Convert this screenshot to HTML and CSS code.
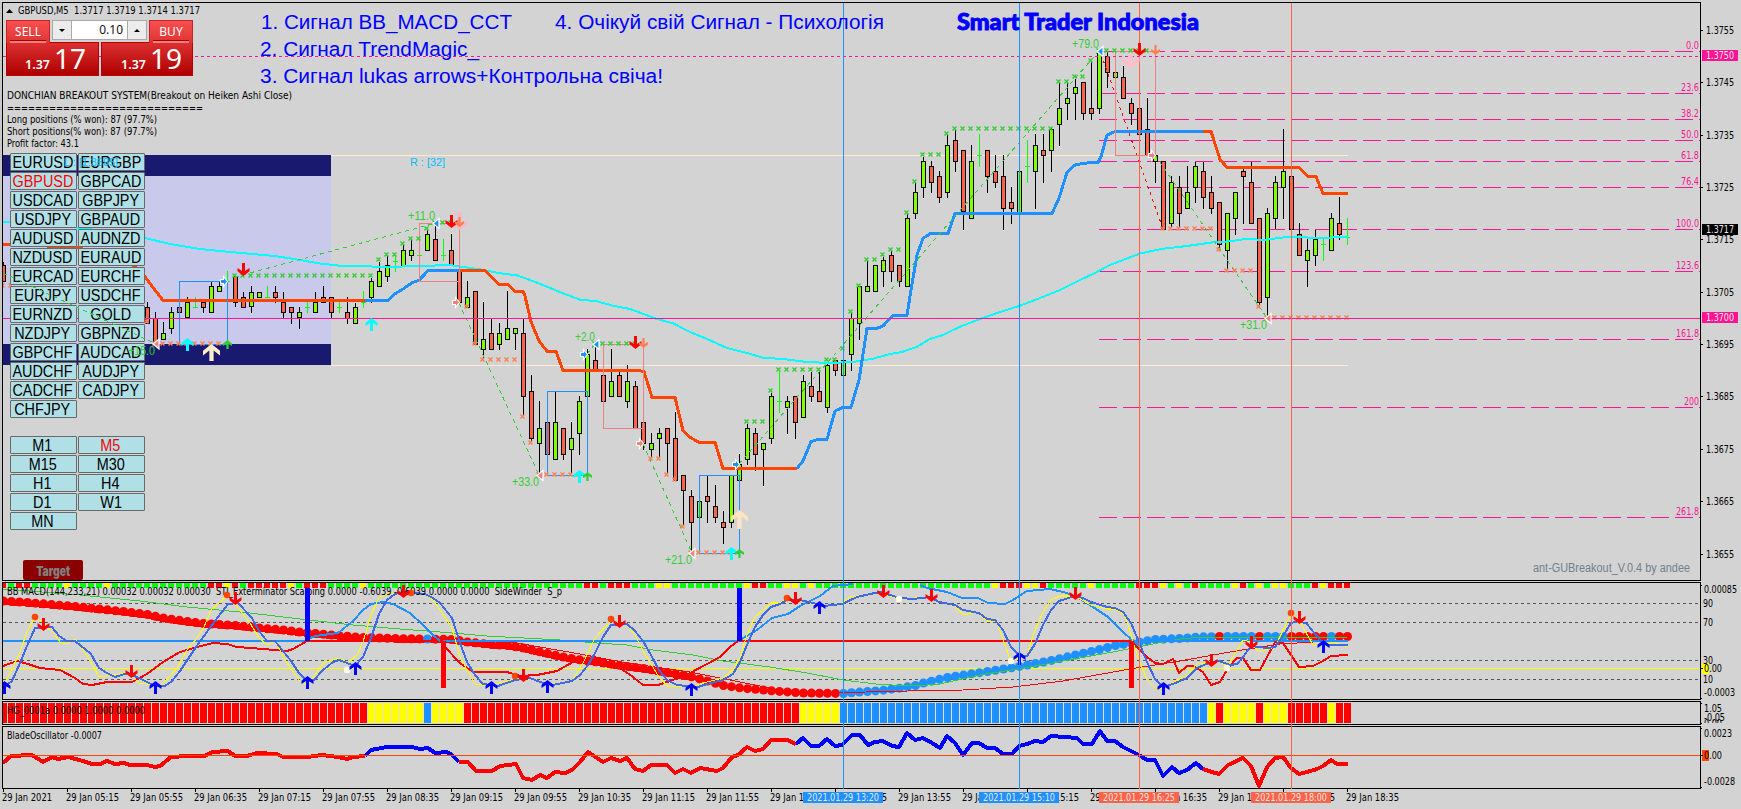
FILE: index.html
```html
<!DOCTYPE html>
<html lang="uk">
<head>
<meta charset="utf-8">
<title>GBPUSD,M5</title>
<link rel="stylesheet" href="styles.css">
</head>
<body>
<main class="terminal">
  <svg class="layer" id="chart" viewBox="0 0 1741 809" width="1741" height="809"></svg>

  <section class="ticket">
    <div class="ticket-top">
      <div class="tab">SELL</div>
      <div class="lot">
        <span class="step"><i class="tri down"></i></span>
        <span class="lot-value">0.10</span>
        <span class="step"><i class="tri up"></i></span>
      </div>
      <div class="tab">BUY</div>
    </div>
    <div class="ticket-quotes">
      <div class="quote"><small>1.37</small><b>17</b></div>
      <div class="quote"><small>1.37</small><b>19</b></div>
    </div>
  </section>

  <section class="switcher">
    <div class="keys" id="symbols"></div>
    <div class="keys" id="frames"></div>
    <div class="target"><span>Target</span></div>
  </section>

  <svg class="layer over" id="overlay" viewBox="0 0 1741 809" width="1741" height="809"></svg>
</main>
<script src="chart.js"></script>
</body>
</html>
```
FILE: styles.css
```css
* { box-sizing: border-box; }
body { margin: 0; background: #d3d3d3; overflow: hidden; }
.terminal { position: relative; width: 1741px; height: 809px; font-family: "DejaVu Sans Condensed", "DejaVu Sans", sans-serif; }
.layer { position: absolute; left: 0; top: 0; display: block; }
.layer text { white-space: pre; }
.over { pointer-events: none; }
.crisp { shape-rendering: crispEdges; }

.ui { font-family: "DejaVu Sans Condensed", "DejaVu Sans", sans-serif; font-size: 10.5px; }
.arial { font-family: "Liberation Sans", Arial, sans-serif; }
.brand { font-family: Lato, Inter, sans-serif; font-weight: 900; font-size: 22.5px; stroke: #00f; stroke-width: .9px; }

.ticket { position: absolute; left: 6px; top: 20px; width: 187px; height: 56px; }
.ticket-top { display: flex; justify-content: space-between; height: 22px; }
.tab { width: 44px; height: 23px; color: #fff; font: 12px/21px "Noto Sans", sans-serif; text-align: center; background: linear-gradient(#f75050, #df3333); border: 1px solid #c22; border-bottom: 0; position: relative; z-index: 1; }
.tab::after { content: ""; position: absolute; left: 3px; right: 3px; bottom: 0; height: 2px; background: #f08080; border-top: 1px solid #a00; }
.lot { display: flex; width: 95px; height: 20px; border: 1px solid #a9a9a9; background: #fff; }
.step { width: 19px; background: #ececec; display: flex; align-items: center; justify-content: center; }
.step:first-child { border-right: 1px solid #a9a9a9; }
.step:last-child { border-left: 1px solid #a9a9a9; }
.lot-value { flex: 1; text-align: right; padding-right: 4px; font: 12px/18px "Noto Sans", sans-serif; color: #111; }
.tri { border-left: 3px solid transparent; border-right: 3px solid transparent; }
.tri.down { border-top: 3px solid #000; }
.tri.up { border-bottom: 3px solid #000; }
.ticket-quotes { display: flex; gap: 2px; }
.quote { width: 93px; height: 34px; display: flex; justify-content: flex-end; align-items: baseline; gap: 4px; padding-right: 12px; color: #fff; background: linear-gradient(#dc3030, #ae0000); border: 1px solid #b80000; }
.quote:last-child { width: 92px; padding-right: 10px; }
.quote small { font: 600 12.5px/30px "Noto Sans", sans-serif; }
.quote b { font: 400 28px/30px "Noto Sans", sans-serif; }

.switcher { position: absolute; left: 10px; top: 153px; width: 135px; }
.keys { display: grid; grid-template-columns: 67px 67px; column-gap: 1px; row-gap: 1px; margin-bottom: 18px; }
.key { height: 18px; background: #b0e0e6; border: 1px solid #696969; border-radius: 1px; color: #000; font: 16px/18px "Liberation Sans", Arial, sans-serif; display: flex; justify-content: center; white-space: nowrap; }
.key span { transform: scaleX(.9) translateX(-1px); }
.key.on { color: #f00; }
.target { margin: 30px 0 0 13px; width: 60px; height: 20px; background: #8b0000; border-radius: 2px; color: #808080; display: flex; justify-content: center; font: 900 13px/22px Inter, "Liberation Sans", sans-serif; }
.target span { transform: scaleX(.8); }
```
FILE: chart.js
```js
const NS = 'http://www.w3.org/2000/svg';
const chart = document.getElementById('chart');
const overlay = document.getElementById('overlay');
let layer = chart;

function el(tag, attrs, text) {
  const n = document.createElementNS(NS, tag);
  for (const k in attrs) n.setAttribute(k, attrs[k]);
  if (text !== undefined) n.textContent = text;
  layer.appendChild(n);
  return n;
}
const box = (x, y, w, h, fill) => el('rect', { x, y, width: w, height: h, fill, class: 'crisp' });
const frame = (x1, y1, x2, y2, c) => el('rect', { x: x1 + .5, y: y1 + .5, width: x2 - x1, height: y2 - y1, fill: 'none', stroke: c, class: 'crisp' });
const hline = (x1, x2, y, c, dash) => el('path', { d: `M${x1} ${y + .5}H${x2}`, stroke: c, 'stroke-dasharray': dash || 'none', class: 'crisp' });
const curve = (pts, c, w, dash) => el('polyline', { points: pts, fill: 'none', stroke: c, 'stroke-width': w, 'stroke-dasharray': dash || 'none', 'stroke-linejoin': 'round', class: 'crisp' });
function label(x, y, s, c, w, size, cls) {
  const a = { x, y, fill: c, class: cls || 'ui' };
  if (w) { a.textLength = w; a.lengthAdjust = 'spacingAndGlyphs'; }
  if (size) a.style = `font-size:${size}px`;
  el('text', a, s);
}
function mark(x, y, c) {
  el('path', { d: `M${x - 2.5} ${y - 1.5}l4 4M${x + 1.5} ${y - 1.5}l-4 4`, stroke: c, 'stroke-width': 1.4 });
}
function marks(from, to, y, c) { for (let x = from; x <= to; x += 8) mark(x, y, c); }
/* arrow: (x, y) is the tip, dir 1 points down and -1 points up */
function arrow(x, y, dir, h, w, c) {
  const k = -dir, s = w / 2, t = Math.max(1, w / 8);
  el('path', { fill: c, d: `M${x} ${y}L${x - s} ${y + k * s * .8}L${x - s} ${y + k * (s * .8 + t * 2.2)}L${x - t} ${y + k * (t * 2.6 + 1)}V${y + k * h}H${x + t}V${y + k * (t * 2.6 + 1)}L${x + s} ${y + k * (s * .8 + t * 2.2)}V${y + k * s * .8}Z` });
}
const triL = (x, y, c) => el('path', { d: `M${x - 5} ${y}l6 -5v10z`, fill: c, stroke: '#fff', 'stroke-width': 1.2 });
const triR = (x, y, c) => el('path', { d: `M${x - 3.5} ${y - 2}h3v-3l4 5l-4 5v-3h-3z`, fill: c, stroke: '#fff', 'stroke-width': 1.1 });

const PINK = '#ff1493', BLUE = '#1e90ff', ORANGE = '#ff4500', GREEN = '#32cd32', SALMON = '#ff7f50', CORAL = '#f08080', TOMATO = '#ff6347';

/* session range */
box(3, 155, 328, 210, '#c9c9ec');
box(3, 155, 328, 21, '#191970');
box(3, 344, 328, 21, '#191970');
hline(331, 1348, 155, '#ffebcd');
hline(331, 1348, 365, '#ffebcd');

/* Fibonacci grid */
[['0.0', 51], ['23.6', 93], ['38.2', 119], ['50.0', 140], ['61.8', 161], ['76.4', 187], ['100.0', 229], ['123.6', 271], ['161.8', 339], ['200', 407], ['261.8', 517]].forEach(([s, y]) => {
  hline(1099, 1700, y, PINK, '18 6');
  const w = s.length === 3 ? (s === '200' ? 15 : 13) : s.length === 4 ? 18 : 23;
  label(1699 - w, y - 2, s, PINK, w);
});

/* candles: x, high, body top, body bottom, low, direction */
const candles = `3 262 265 282 282 r
147 302 307 324 324 r|155 312 318 343 343 r|163 322 333 340 340 g|171 307 312 329 334 g|179 307 307 313 313 r|187 297 302 318 318 g|195 297 307 307 308 l|203 302 302 308 313 r|211 282 286 313 313 g|219 282 286 292 292 g|227 271 281 281 290 l|235 276 276 303 307 r|243 292 297 308 308 r|251 286 292 307 313 g|259 292 292 298 298 g|267 286 297 297 298 l|275 286 292 298 303 r|283 292 302 313 318 r|291 307 307 313 324 r|299 307 312 318 329 g|307 300 307 307 313 l|315 292 302 313 313 g|323 286 297 303 303 r|331 297 297 313 318 r|339 302 307 307 313 l|347 297 312 319 324 r|355 303 307 324 324 g|363 291 302 302 308 l|371 278 281 298 303 g|379 262 271 287 287 g|387 256 265 277 282 g|395 256 261 261 272 l|403 245 250 266 266 g|411 240 250 256 261 g|419 254 255 255 256 l|427 230 234 251 251 g|435 223 239 261 261 r|443 239 255 255 261 l|451 234 250 265 265 r|459 271 271 303 303 r|467 281 297 308 308 g|475 291 291 345 345 r|483 302 339 350 358 g|491 319 333 350 350 r|499 323 333 345 350 g|507 291 328 340 340 g|515 328 328 334 350 g|523 319 333 397 415 r|531 375 391 439 441 r|539 401 428 444 473 g|547 422 422 455 455 r|555 392 422 460 460 g|563 428 428 455 460 r|571 422 438 450 473 g|579 396 401 434 455 g|587 349 354 397 397 g|595 346 360 370 370 r|603 375 375 402 402 r|611 349 381 397 397 g|619 372 375 397 397 r|627 365 381 402 408 g|635 381 386 429 429 r|643 422 422 444 450 r|651 433 443 450 457 g|659 428 433 439 457 g|667 428 428 444 473 r|675 412 438 481 481 r|683 475 475 491 526 r|691 490 496 523 552 r|699 501 501 518 518 g|707 476 496 502 523 r|715 485 506 518 523 r|723 511 522 528 544 r|731 475 475 523 528 g|739 454 464 481 481 g|747 424 428 460 465 g|755 428 433 455 471 r|763 443 443 450 486 g|771 393 396 439 444 g|779 372 401 401 413 l|787 396 401 408 434 g|795 396 396 423 439 r|803 375 381 418 418 g|811 372 386 397 402 r|819 372 391 402 402 r|827 362 365 408 413 g|835 360 360 371 376 r|843 360 360 376 376 g|851 313 318 355 371 g|859 286 286 324 340 g|867 261 286 292 292 g|875 265 265 292 292 g|883 257 260 272 287 g|891 251 255 272 282 r|899 265 265 282 287 r|907 214 218 287 287 g|915 183 192 214 219 g|923 157 161 188 198 g|931 161 166 183 193 r|939 171 176 198 203 r|947 135 145 193 198 g|955 130 140 162 172 r|963 150 150 212 230 r|971 145 161 219 219 g|979 134 155 155 167 l|987 150 150 177 193 r|995 155 171 183 188 r|1003 155 176 209 230 r|1011 187 202 209 224 r|1019 171 171 213 213 g|1027 140 166 166 183 l|1035 134 145 172 209 g|1043 134 150 156 183 r|1051 128 129 151 172 g|1059 83 108 125 146 g|1067 83 98 104 120 g|1075 79 87 94 120 g|1083 82 82 114 120 r|1091 62 108 114 120 r|1099 51 51 109 114 g|1107 52 56 73 88 r|1115 72 72 78 78 g|1123 66 77 99 99 r|1131 98 103 114 125 r|1139 108 108 135 135 r|1147 98 129 156 156 r|1155 155 155 162 183 g|1163 161 161 230 230 r|1171 176 182 224 227 g|1179 176 187 214 227 r|1187 166 192 209 209 g|1195 162 166 188 203 g|1203 162 171 198 209 r|1211 176 192 209 214 r|1219 202 202 245 248 r|1227 213 213 251 269 g|1235 192 192 219 235 g|1243 168 171 177 224 r|1251 162 182 224 224 r|1259 218 218 303 305 r|1267 208 213 298 317 g|1275 176 182 219 229 g|1283 129 171 188 219 g|1291 176 176 230 230 r|1299 223 234 256 256 r|1307 239 250 261 287 g|1315 230 239 256 266 g|1323 239 244 244 261 l|1331 213 218 251 251 g|1339 197 223 235 240 r|1347 218 237 237 245 l`;
candles.split(/[|\n]/).forEach(row => {
  const p = row.split(' '), d = p[5];
  const [x, hi, top, bot, lo] = p.map(Number);
  if (d === 'l') {
    box(x, hi, 1, lo - hi, '#00ff00');
    box(x - 2, top, 5, 1, '#00ff00');
    return;
  }
  box(x, hi, 1, lo - hi, '#000');
  box(x - 2, top, 5, bot - top, '#000');
  box(x - 1, top + 1, 3, bot - top - 2, d === 'g' ? '#7fff00' : TOMATO);
});

/* moving average and trend line */
const CY = '#00ffff';
curve('3,221.5 10,221.5', CY, 2);
curve('76,228 92,228', CY, 2);
curve('145,238 170,244 200,249 230,252 275,256 300,260 320,263.5 343,266 383,266.7 423,266.3 447,264.7 463,267 480,269.3 500,273.3 517,275.3 530,280 547,286.7 563,293.3 580,299.7 597,301.3 613,305.7 630,309 640,312.7 657,319 673,323.3 690,332 707,339 727,348 747,353 763,357.7 783,359 807,362 830,363 853,362 873,358.7 890,354 902,352 917,346.7 930,339 943,335 960,326.7 980,319 997,313 1020,305.7 1040,298 1060,290 1080,280 1093,274 1110,265 1140,253.5 1163,248.7 1187,246 1213,242.3 1230,241.3 1247,238.7 1263,240 1287,237 1300,237 1313,238 1330,238 1335,237 1348,237', CY, 2);
curve('3,244.5 75,247 130,262 145,277 163,300.5 365,300.5', ORANGE, 3);
curve('365,300.5 388,300.5 395,293.7 402,289.7 412,282.7 419,280.3 428,270.7 459,270.7', BLUE, 3);
curve('459,270.7 485,270.7 499,284.3 508,284.3 515,291.3 523,291.3 525,296 531,321.7 539,340.7 547,351.3 556,351.3 563,370.5 638,370.5 644,371.5 652,397.3 675,397.3 683,430.7 690,437.3 699,442.3 715,442.3 723,468.5 797,468.5', ORANGE, 3);
curve('797,468.3 803,461 811,441.7 818,439.3 827,439.3 835,411 843,407.3 851,407.3 859,380 867,328.5 877,328.3 883,326 893,315.5 907,315.3 911,290 917,255 923,238.3 931,233.3 948,233.3 955,213.5 1052,213.5 1059,198.3 1067,172.3 1075,165 1083,163.3 1098,162.3 1101,156.7 1107,135 1115,131.5 1203,131.5', BLUE, 3);
curve('1203,131.5 1211,131.5 1220,159.3 1227,167.5 1299,167.5 1308,176.5 1316,176.5 1323,193.5 1348,193.5', ORANGE, 3);

/* trades */
['235,277 436,223', '459,303 539,475', '587,354 595,344', '643,444 692,553', '739,464 1099,51', '1155,155 1267,318'].forEach(p => curve(p, GREEN, 1, '4 4'));
curve('1101,54 1163,229', '#f00', 1, '3 4');
[[179, 281, 227, 344], [547, 391, 587, 475], [699, 475, 739, 553]].forEach(r => frame(...r, BLUE));
[[419, 223, 459, 281], [603, 344, 643, 428], [1115, 51, 1155, 155]].forEach(r => frame(...r, CORAL));

[[235, 371, 275], [379, 379, 259], [387, 395, 254], [403, 403, 243], [411, 419, 238], [427, 427, 228], [435, 451, 222], [595, 635, 343], [747, 763, 421], [771, 771, 390], [779, 819, 369], [827, 835, 359], [843, 843, 348], [851, 851, 311], [859, 859, 285], [867, 875, 259], [883, 883, 254], [891, 899, 249], [907, 907, 212], [915, 915, 181], [923, 939, 154], [947, 947, 133], [955, 1051, 128], [1059, 1067, 81], [1075, 1083, 76], [1091, 1091, 60], [1099, 1147, 50]].forEach(m => marks(...m, GREEN));
[[3, 11, 285], [147, 147, 321], [155, 219, 343], [467, 467, 306], [475, 475, 343], [483, 515, 359], [523, 523, 416], [531, 531, 442], [539, 579, 474], [651, 659, 458], [667, 667, 474], [675, 675, 479], [683, 683, 526], [691, 731, 552], [1163, 1211, 228], [1219, 1219, 249], [1227, 1251, 270], [1259, 1259, 306], [1267, 1347, 317]].forEach(m => marks(...m, SALMON));

/* price levels and time cursors */
hline(3, 1700, 318, PINK);
hline(3, 1700, 56, PINK, '3 3');
[[843, BLUE], [1019, BLUE], [1139, TOMATO], [1291, TOMATO]].forEach(([x, c]) => box(x, 3, 1, 785, c));

/* signals */
arrow(459.5, 230, 1, 18, 15, '#ffb6c1');
arrow(1130.5, 69, 1, 15, 18, '#ffc0cb');
[[243.5, 276], [451.5, 228], [635.5, 349], [1139.5, 56]].forEach(([x, y]) => arrow(x, y, 1, 13, 12, '#f00'));
[[459.5, 227], [643.5, 348], [1155.5, 55]].forEach(([x, y]) => arrow(x, y, 1, 10, 9, SALMON));
[[187.5, 338], [371.5, 318], [579.5, 470], [731.5, 547]].forEach(([x, y]) => arrow(x, y, -1, 13, 12, CY));
[[227.5, 340], [587.5, 472], [739.5, 549]].forEach(([x, y]) => arrow(x, y, -1, 9, 9, GREEN));
arrow(211.5, 344, -1, 17, 17, '#ffebcd');
arrow(739.5, 510, -1, 19, 17, '#ffe4c4');
[[438, 223.5], [598, 344.5], [1102, 51.5]].forEach(([x, y]) => triL(x, y, BLUE));
[[158, 344], [542, 475.5], [694, 553.5], [1270, 318.5]].forEach(([x, y]) => triL(x, y, CORAL));
[[224, 281.5], [584, 354.5], [736, 464.5]].forEach(([x, y]) => triR(x, y, BLUE));
[[456, 302.5], [640, 443.5], [1152, 155.5]].forEach(([x, y]) => triR(x, y, CORAL));
[['+11.0', 408, 220, 27], ['+2.0', 575, 341, 20], ['+33.0', 512, 486, 27], ['+21.0', 665, 564, 27], ['+79.0', 1072, 48, 27], ['+31.0', 1240, 329, 27]].forEach(([s, x, y, w]) => label(x, y, s, GREEN, w, 12, 'arial'));
label(410, 166, 'R : [32]', '#00bfff', 35, 11, 'arial');

/* headings */
[['1. Сигнал BB_MACD_CCT', 261, 29, 251], ['4. Очікуй свій Сигнал - Психологія', 555, 29, 329], ['2. Сигнал TrendMagic_', 260, 56, 219], ['3. Сигнал lukas arrows+Контрольна свіча!', 260, 83, 403]].forEach(([s, x, y, w]) => label(x, y, s, '#00f', w, 19.5, 'arial'));
label(957, 30, 'Smart Trader Indonesia', '#00f', 242, 0, 'brand');
label(1533, 572, 'ant-GUBreakout_V.0.4 by andee', '#708090', 157, 12, 'arial');
el('path', { d: 'M6 13L9.5 9L13 13Z', fill: '#000' });
label(18, 14, 'GBPUSD,M5  1.3717 1.3719 1.3714 1.3717', '#000', 182);
label(7, 99, 'DONCHIAN BREAKOUT SYSTEM(Breakout on Heiken Ashi Close)', '#000', 285);
label(7, 112, '============================', '#000', 196);
label(7, 123, 'Long positions (% won): 87 (97.7%)', '#000', 150);
label(7, 135, 'Short positions(% won): 87 (97.7%)', '#000', 150);
label(7, 147, 'Profit factor: 43.1', '#000', 72);

/* ---- BB MACD window ---- */
[603, 622, 660, 679].forEach(y => hline(3, 1700, y, '#555', '3 3'));
box(3, 668, 1697, 1, '#ffff00');

const HUES = { r: '#f00', g: '#00ff00', y: '#ffff00', b: BLUE };
function strip(runs, draw) {
  let i = 0;
  for (const [, hue, n] of runs.matchAll(/([rgyb])(\d+)/g)) for (let k = 0; k < +n; k++, i++) draw(3 + i * 8, HUES[hue]);
}
strip('r1g1r2g4y1g4y1g12r2y1r1g1r5y1g1r3g4y1g27r2g1r3g3y2g9y1r2g2y2g1y1g22y1r3y2r1g5y1g5r3y1g1y1g1r1g4y1r1g1y1g1y2g3r1y1r3', (x, c) => box(x === 3 ? 3 : x - 3, 583, x === 3 ? 3 : 6, 5, c));

const macd = [[3, 601], [27, 602.5], [51, 604.5], [75, 606.5], [99, 609], [123, 611.5], [147, 614.5], [163, 618], [187, 621.5], [203, 623.5], [235, 625.5], [259, 628], [283, 630], [299, 632], [331, 635], [363, 637.5], [395, 638.5], [453, 639.5], [467, 642], [491, 644.5], [507, 645.5], [523, 648], [540, 652], [563, 657], [577, 659.5], [597, 662], [620, 665.5], [643, 668.5], [667, 672.5], [690, 676.5], [707, 681], [723, 685.5], [740, 688], [773, 691], [803, 693], [843, 693.5], [860, 692], [880, 690.5], [900, 688], [915, 685.5], [923, 683], [947, 677.5], [970, 674], [987, 671.5], [1013, 667.5], [1030, 664.5], [1053, 660], [1073, 655.5], [1093, 651], [1117, 645], [1133, 643], [1155, 639.5], [1180, 638.5], [1197, 637], [1220, 636.5], [1348, 636.5]];
function macdAt(x) {
  for (let i = 1; i < macd.length; i++) if (x <= macd[i][0]) {
    const [a, b] = [macd[i - 1], macd[i]];
    return a[1] + (b[1] - a[1]) * (x - a[0]) / (b[0] - a[0]);
  }
  return 636.5;
}
curve(macd.filter(p => p[0] < 700).map(p => p[0] + ',' + (p[1] + 1)).join(' '), '#f00', 6);
const redDots = new Set([1219, 1259, 1291, 1299, 1307, 1315, 1323, 1339, 1347]);
for (let x = 3; x <= 1347; x += 8) {
  const red = (x < 843 && x !== 427) || redDots.has(x);
  el('circle', { cx: x + .5, cy: macdAt(x), r: 4.5, fill: red ? '#f00' : BLUE });
}
curve('3,589 80,595 140,601 187,607 250,613 300,619 353,625 400,629 440,632 487,636 560,640 597,643 627,645 653,650 693,655 723,661 770,667 807,673 843,680 880,684.5 917,686 940,684 980,675 1030,667 1080,658 1113,652 1153,644 1180,639 1203,637 1347,637', GREEN, 1);
curve('440,638 517,643 580,654 627,663 690,672 740,682 780,690 837,693 880,691.5 963,690 1013,687 1063,681 1130,669 1180,661 1230,652 1280,644 1347,640', '#f00', 1);
box(3, 640, 302, 2, BLUE);
box(305, 640, 138, 2, '#f00');
box(443, 640, 295, 2, BLUE);
box(738, 640, 394, 2, '#f00');
box(1132, 640, 216, 2, BLUE);
curve('3,666 17,661 28,664 40,668 60,670 75,678 83,684 92,685 107,682 132,682 147,674 163,662 180,652 197,647 213,643 227,644 237,647 263,649 287,651 293,649 307,641', '#f00', 2);
curve('443,645 460,663 473,672 507,672 520,676 537,675 557,671 573,662 597,658 620,668 633,677 643,685 658,685 673,680 690,673 707,664 720,657 730,647 738,641', '#f00', 2);
curve('1131,641 1140,650 1147,657 1155,663 1163,664 1173,659 1179,673 1187,666 1193,666 1203,672 1211,685 1220,682 1228,668 1237,658 1243,658 1251,670 1260,670 1267,657 1275,642 1283,643 1291,655 1299,667 1313,666 1323,661 1331,656 1348,655', '#f00', 2);
curve('308,639 315,636 338,633 353,621 363,610 371,604 383,602 393,604 410,613 423,625 433,635 440,641', BLUE, 2);
curve('738,641 757,630 772,618 788,614 800,606 820,596 833,586 853,584', BLUE, 2);
curve('920,585 927,588 947,592 962,598 978,598 988,603 1005,604 1013,600 1027,591 1050,589 1067,593 1077,597 1093,607 1108,617 1123,632 1132,640', BLUE, 2);
curve('3,687 13,667 20,652 27,632 35,617 42,622 53,632 60,642 67,644 75,639 83,650 91,662 99,677 113,675 128,672 139,683 155,685 163,684 177,668 187,650 197,638 204,627 211,610 227,596 235,604 250,623 259,638 267,645 275,641 287,663 299,680 307,685 315,675 323,663 339,658 348,663 357,655 363,642 371,615 379,598 387,594 403,592 425,594 433,600 440,610 452,628 460,657 475,684 487,686 515,679 530,678 547,685 572,681 583,663 595,638 611,621 627,625 635,635 643,651 659,677 667,686 690,687 707,682 723,678 733,670 740,657 747,635 755,617 771,603 780,603 787,598 807,602 820,606 840,604 850,597 880,593 900,599 930,597 940,602 955,606 963,615 977,612 987,621 997,622 1003,640 1011,661 1027,655 1035,630 1043,612 1051,600 1060,596 1075,596 1091,605 1107,609 1115,609 1125,615 1133,642 1139,660 1147,680 1157,690 1170,684 1187,675 1197,664 1219,661 1227,667 1233,657 1243,640 1251,642 1259,652 1275,647 1291,614 1299,620 1313,645 1323,646 1333,642 1347,647', '#ffff00', 1.1);
curve('3,688 12,681 20,663 27,646 35,628 52,627 59,636 67,641 75,641 91,654 99,668 107,673 115,677 128,673 139,678 155,686 165,686 172,681 180,671 196,647 212,625 228,604 238,603 252,618 259,631 267,641 275,641 291,661 299,673 307,681 314,680 323,670 333,662 339,660 355,666 363,657 371,638 379,614 387,600 395,594 403,592 425,594 433,598 440,603 452,618 460,643 467,662 475,675 483,684 498,686 515,680 530,678 540,682 553,685 572,681 580,675 588,665 595,653 603,637 611,625 627,624 635,631 643,641 651,655 659,670 667,680 677,685 698,687 707,684 723,680 733,674 740,662 747,645 755,627 763,615 771,607 780,604 787,600 800,600 817,604 823,606 842,604 857,597 870,594 880,592 900,598 913,599 930,597 939,602 955,605 963,610 979,613 987,619 995,620 1003,630 1011,647 1019,655 1027,656 1035,644 1043,625 1051,610 1059,601 1075,596 1083,598 1091,602 1107,607 1115,608 1123,612 1131,623 1139,642 1147,662 1155,679 1163,687 1173,684 1187,678 1197,668 1211,662 1219,661 1230,665 1237,664 1243,657 1251,646 1267,648 1275,647 1283,636 1291,623 1299,621 1307,624 1315,634 1323,643 1328,645 1348,645', '#4169e1', 2);
label(7, 595, 'BB MACD(144,233,21) 0.00032 0.00032 0.00030  STI_Exterminator Scalping 0.0000 -0.6039 -0.6039 0.0000 0.0000  SideWinder  S_p', '#000', 555);
box(305, 588, 5, 53, '#00f');
box(737, 588, 5, 53, '#00f');
box(441, 641, 5, 47, '#f00');
box(1129, 641, 5, 47, '#f00');
[[35, 617], [227, 595], [411, 593], [515, 676], [611, 619], [787, 598], [1291, 613]].forEach(([cx, cy]) => el('circle', { cx, cy, r: 3.3, fill: ORANGE }));
[[347, 670], [899, 599], [1011, 661], [1227, 668]].forEach(([cx, cy]) => el('circle', { cx, cy, r: 3.2, fill: '#ffffe0' }));
[[43, 631], [235, 605], [131, 678], [403, 598], [523, 682], [619, 628], [795, 605], [883, 598], [931, 602], [1075, 600], [1211, 667], [1251, 649], [1299, 624]].forEach(([x, y]) => arrow(x + .5, y, 1, 13, 12, '#f00'));
[[4, 681], [155, 681], [307, 676], [355, 662], [491, 681], [547, 680], [691, 683], [819, 601], [1019, 652], [1163, 682], [1323, 640]].forEach(([x, y]) => arrow(x + .5, y, -1, 13, 12, '#00f'));

/* ---- HG window ---- */
strip('r46y7b1y4r42y5b46y1r1y4r1y3r5y1r2', (x, c) => { box(x - 4, 703, 8, 20, '#e6e0d8'); box(x - 3, 703, 7, 20, c); });
label(7, 714, 'HG_0001a 0.0000 1.0000 0.0000', '#000', 138);

/* ---- BladeOscillator window ---- */
curve('3,763 11,756 32,755 43,762 52,757 58,759 68,757 83,761 92,764 100,764 107,761 115,764 124,763 130,765 147,765 155,767 160,766 171,757 187,756 205,756 212,752 228,751 235,756 247,756 257,753 277,754 283,757 307,757 322,755 338,757 347,759 353,757 365,756', '#f00', 4);
curve('365,756 371,750 387,747 412,747 420,749 428,748 435,753 447,752 452,755 459,762', '#00f', 4);
curve('459,762 468,762 476,771 492,771 500,766 516,764 523,778 532,780 540,775 547,778 555,772 565,773 572,770 580,762 588,752 603,762 611,758 620,761 627,758 635,769 643,771 651,765 667,765 675,773 683,769 691,773 700,768 717,771 723,768 732,757 738,755 747,747 755,751 763,749 771,740 787,740 796,744', '#f00', 4);
curve('796,744 803,738 811,746 819,746 827,739 835,746 842,745 852,735 860,735 868,745 875,742 883,741 892,746 899,747 907,733 915,740 923,738 932,743 940,748 947,736 955,743 963,755 972,743 979,743 987,748 995,748 1003,754 1012,754 1019,746 1027,744 1035,741 1043,742 1051,736 1077,738 1083,744 1092,744 1100,731 1107,741 1115,741 1123,747 1139,755 1147,760 1155,760 1163,776 1172,767 1179,773 1187,770 1196,763 1203,769', '#00f', 4);
curve('1203,769 1212,772 1219,774 1228,765 1243,758 1251,766 1259,786 1267,767 1275,758 1283,757 1291,768 1299,774 1307,772 1317,769 1323,766 1331,760 1337,764 1348,764', '#f00', 4);
hline(3, 1700, 755, ORANGE);
label(7, 739, 'BladeOscillator -0.0007', '#000', 95);

/* window borders */
box(0, 2, 2, 787, '#c8c8c8');
[[2, 580], [582, 699], [701, 724], [726, 788]].forEach(([a, b]) => frame(2, a, 1700, b, '#000'));
[[843, BLUE], [1019, BLUE], [1139, TOMATO], [1291, TOMATO]].forEach(([x, c]) => box(x, 573, 1, 216, c));

/* price axis */
[1.3755, 1.3745, 1.3735, 1.3725, 1.3715, 1.3705, 1.3695, 1.3685, 1.3675, 1.3665, 1.3655].forEach((p, i) => {
  const y = Math.round(30 + i * 52.35);
  box(1701, y, 2, 1, '#000');
  label(1706, y + 4, p.toFixed(4), '#000', 28);
});
[['1.3750', 50, PINK], ['1.3700', 312, PINK], ['1.3717', 224, '#000']].forEach(([s, y, c]) => { box(1702, y, 36, 11, c); label(1706, y + 9, s, '#e8e8e8', 28); });
box(1702, 663, 7, 11, '#ffff00');
box(1702, 750, 7, 11, ORANGE);
[['0.00085', 593, 33, 1704], ['90', 607, 10, 1703], ['70', 626, 10, 1703], ['30', 664, 10, 1703], ['0.00', 672, 18, 1704], ['10', 683, 10, 1703], ['-0.0003', 696, 31, 1704], ['1.05', 712, 18, 1704], ['-0.05', 721, 21, 1704], ['0.0023', 737, 28, 1704], ['0.00', 759, 18, 1704], ['-0.0028', 785, 31, 1704]].forEach(([s, y, w, x]) => label(x, y, s, '#000', w));
el('clipPath', { id: 'axisClip' }).appendChild(el('rect', { x: 1702, y: 718, width: 30, height: 5 }));
el('text', { x: 1704, y: 727, class: 'ui', textLength: 18, lengthAdjust: 'spacingAndGlyphs', 'clip-path': 'url(#axisClip)' }, '0.00');
[585, 698, 703, 723, 728, 787].forEach(y => box(1701, y, 1, 1, '#000'));
box(1701, 668, 2, 1, '#000');
box(1701, 755, 2, 1, '#000');

/* time axis */
['2021', '05:15', '05:55', '06:35', '07:15', '07:55', '08:35', '09:15', '09:55', '10:35', '11:15', '11:55', '12:35', '13:15', '13:55', '14:35', '15:15', '15:55', '16:35', '17:15', '17:55', '18:35'].forEach((t, i) => {
  box(3 + 64 * i, 789, 1, 3, '#000');
  label(2 + 64 * i, 801, '29 Jan ' + t, '#000', i ? 53 : 50);
});
[[843, '13:20', BLUE], [1019, '15:10', BLUE], [1139, '16:25', TOMATO], [1291, '18:00', TOMATO]].forEach(([x, t, c]) => {
  box(x - 40, 792, 80, 11, c);
  label(x - 36, 801, '2021.01.29 ' + t, '#e6e6e6', 72);
});

/* symbol and timeframe keys */
function fill(id, names, active) {
  document.getElementById(id).innerHTML = names.split(' ').map(n => `<div class="key${n === active ? ' on' : ''}"><span>${n}</span></div>`).join('');
}
fill('symbols', 'EURUSD EURGBP GBPUSD GBPCAD USDCAD GBPJPY USDJPY GBPAUD AUDUSD AUDNZD NZDUSD EURAUD EURCAD EURCHF EURJPY USDCHF EURNZD GOLD NZDJPY GBPNZD GBPCHF AUDCAD AUDCHF AUDJPY CADCHF CADJPY CHFJPY', 'GBPUSD');
fill('frames', 'M1 M5 M15 M30 H1 H4 D1 W1 MN', 'M5');

/* objects that sit above the keys */
layer = overlay;
curve('3,273 152,342', GREEN, 1, '4 4');
label(64, 166, 'L : [1.3695]', '#00bfff', 54, 11, 'arial');
label(128, 355, '+15.0', GREEN, 27, 12, 'arial');
```
